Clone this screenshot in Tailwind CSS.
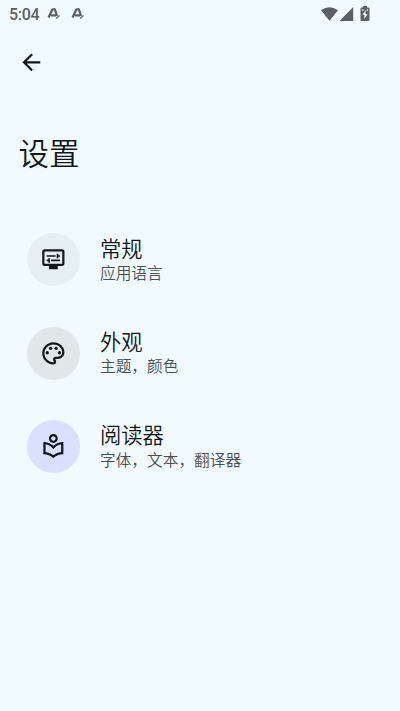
<!DOCTYPE html>
<html lang="zh-CN">
<head>
<meta charset="utf-8">
<meta name="viewport" content="width=device-width, initial-scale=1">
<title>设置</title>
<script src="https://cdn.jsdelivr.net/npm/@tailwindcss/browser@4"></script>
</head>
<body class="h-[711px] w-[400px] overflow-hidden bg-[#f1fbfe] font-['Noto_Sans_CJK_SC',sans-serif] font-[350] text-[#111819]">
<header class="flex h-[27px] items-center pl-[9px] pr-[30px] text-[#5b6062]">
  <span class="pt-[2px] font-[Roboto,sans-serif] text-[16px] leading-[25px] font-medium tracking-[-0.3px]">5:04</span>
  <svg class="ml-[8px] h-[14px] w-[14px]" viewBox="0 0 14 14" fill="none" stroke="currentColor"><path stroke-width="2.2" stroke-linejoin="round" d="M1.500 10.500 5.500 2.300h2.400L10 8.800M3.700 8.300H9"/><path stroke-width="1.300" d="m9 11.500 3.500-3"/></svg>
  <svg class="ml-[10px] h-[14px] w-[14px]" viewBox="0 0 14 14" fill="none" stroke="currentColor"><path stroke-width="2.2" stroke-linejoin="round" d="M1.500 10.500 5.500 2.300h2.400L10 8.800M3.700 8.300H9"/><path stroke-width="1.300" d="m9 11.500 3.500-3"/></svg>
  <div class="ml-auto flex items-center">
    <svg class="h-[14px] w-[17px]" viewBox="0 0 17 14" fill="currentColor"><path d="M0 3.300Q8.500-3 17 3.300L8.500 13.800Z"/></svg>
    <svg class="ml-[1px] h-[14px] w-[15px]" viewBox="0 0 15 14" fill="currentColor"><path d="M14.200 0v14H.5Z"/></svg>
    <svg class="ml-[6px] h-[15px] w-[10px]" viewBox="0 0 10 15" fill="currentColor"><path fill-rule="evenodd" d="M3 0h4v1.400h1.300q1.200 0 1.200 1.200v11.200q0 1.200-1.200 1.200H1.700Q.5 15 .5 13.800V2.600q0-1.200 1.200-1.200H3ZM5.600 4 2.400 8.800h2V13l3.200-5h-2ZM2.200 3.200v1.500h1.300V3.200Zm4.500 0v1.500H8V3.200Z"/></svg>
  </div>
</header>
<main>
  <button class="mt-[22px] ml-[18px] block" aria-label="返回">
    <svg class="h-[26.700px] w-[26.700px]" viewBox="0 0 24 24" fill="currentColor"><path d="M20 11H7.830l5.590-5.590L12 4l-8 8 8 8 1.410-1.410L7.830 13H20v-2z"/></svg>
  </button>
  <h1 class="mt-[55px] ml-[18.500px] text-[30.500px] leading-[42px]">设置</h1>
  <ul class="mt-[60.500px] flex flex-col gap-[40.100px] pl-[26.700px]">
    <li class="flex h-[53.300px] items-center gap-[20px]">
      <span class="flex size-[53.300px] items-center justify-center rounded-full bg-[#e6eff1]"><svg class="size-[26.700px]" viewBox="0 0 24 24" fill="currentColor"><path d="M20 3H4c-1.100 0-2 .9-2 2v11c0 1.100.9 2 2 2h4v3h8v-3h4c1.100 0 2-.9 2-2V5c0-1.100-.9-2-2-2zm0 13H4V5h16v11z"/><path d="M6 8.250h8v1.500H6zM16.500 9.750H18v-1.500h-1.500V7H15v4h1.500zM10 12.250h8v1.500h-8zM7.500 15H9v-4H7.500v1.250H6v1.500h1.500z"/></svg></span>
      <div><p class="text-[21.300px] leading-[25px]">常规</p><p class="mt-[1.500px] text-[15.700px] leading-[24px] text-[#495052]">应用语言</p></div>
    </li>
    <li class="flex h-[53.300px] items-center gap-[20px]">
      <span class="flex size-[53.300px] items-center justify-center rounded-full bg-[#e0e7e9]"><svg class="size-[26.700px]" viewBox="0 0 24 24" fill="currentColor"><path d="M12 22C6.490 22 2 17.510 2 12S6.490 2 12 2s10 4.040 10 9c0 3.310-2.690 6-6 6h-1.770c-.28 0-.5.22-.5.5 0 .12.050.23.130.33.41.47.640 1.060.640 1.670A2.500 2.500 0 0 1 12 22zm0-18c-4.410 0-8 3.590-8 8s3.590 8 8 8c.28 0 .5-.22.5-.5a.54.54 0 0 0-.14-.35c-.41-.46-.63-1.050-.63-1.650a2.500 2.500 0 0 1 2.500-2.500H16c2.210 0 4-1.790 4-4 0-3.860-3.590-7-8-7z"/><circle cx="6.500" cy="11.500" r="1.500"/><circle cx="9.500" cy="7.500" r="1.500"/><circle cx="14.500" cy="7.500" r="1.500"/><circle cx="17.500" cy="11.500" r="1.500"/></svg></span>
      <div><p class="text-[21.300px] leading-[25px]">外观</p><p class="mt-[1.500px] text-[15.700px] leading-[24px] text-[#495052]">主题，颜色</p></div>
    </li>
    <li class="flex h-[53.300px] items-center gap-[20px]">
      <span class="flex size-[53.300px] items-center justify-center rounded-full bg-[#dae0ff]"><svg class="size-[26.700px]" viewBox="0 0 24 24" fill="currentColor"><path d="M16 5c0-2.210-1.790-4-4-4S8 2.790 8 5s1.790 4 4 4 4-1.790 4-4zm-4 2c-1.100 0-2-.9-2-2s.9-2 2-2 2 .9 2 2-.9 2-2 2zm0 4.550C9.640 9.350 6.480 8 3 8v11c3.480 0 6.640 1.350 9 3.550 2.360-2.190 5.520-3.550 9-3.550V8c-3.480 0-6.640 1.350-9 3.550zm7 5.580c-2.530.34-4.930 1.300-7 2.820-2.060-1.520-4.470-2.490-7-2.830v-6.950c2.100.38 4.050 1.350 5.640 2.830L12 14.280l1.360-1.270c1.590-1.480 3.540-2.450 5.640-2.830v6.950z"/></svg></span>
      <div><p class="text-[21.300px] leading-[25px]">阅读器</p><p class="mt-[1.500px] text-[15.700px] leading-[24px] text-[#495052]">字体，文本，翻译器</p></div>
    </li>
  </ul>
</main>
</body>
</html>
